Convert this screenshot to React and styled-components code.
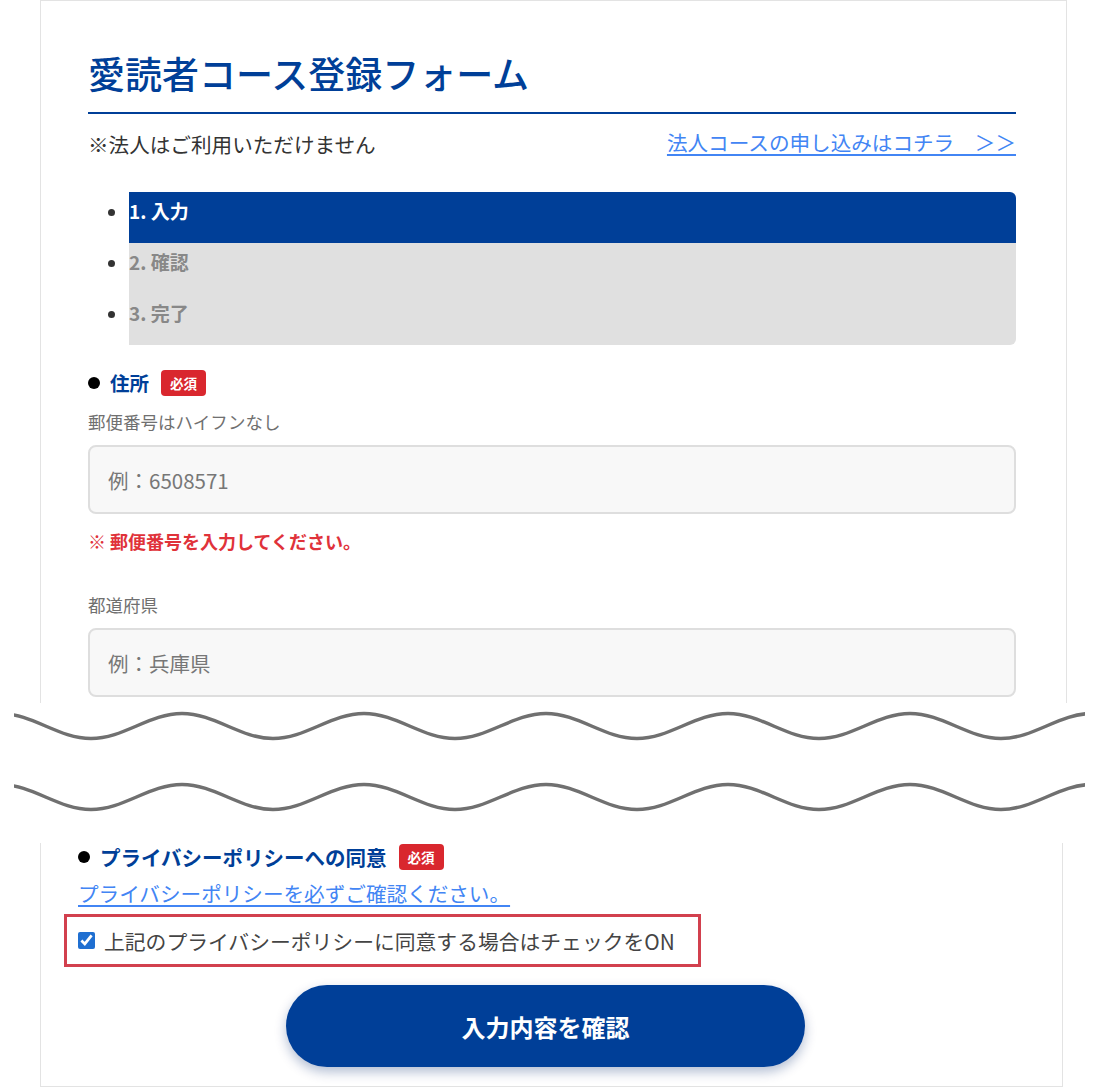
import styled, { createGlobalStyle } from 'styled-components';

const GlobalStyle = createGlobalStyle`
  body {
    margin: 0;
    background: #fff;
    font-family: "Noto Sans CJK JP", "Noto Sans", sans-serif;
    color: #333;
  }
`;

const BLUE = '#003f98';

// Panel superior (cortado por abajo)
const TopPanel = styled.section`
  box-sizing: border-box;
  width: 1027px;
  margin-left: 40px;
  border: 1px solid #e3e3e3;
  border-bottom: none;
  padding: 44px 50px 6px 47px;
`;

const Title = styled.h1`
  margin: 0;
  font-size: 37px;
  line-height: 56px;
  font-weight: 500;
  color: ${BLUE};
  padding-bottom: 11px;
  border-bottom: 2px solid ${BLUE};
`;

const NoticeRow = styled.div`
  display: flex;
  justify-content: space-between;
  margin-top: 15px;
  font-size: 20.6px;
  line-height: 30px;
  color: #333;
`;

const Link = styled.a`
  color: #4285f4;
  text-decoration: underline;
  text-underline-offset: 3px;
  font-size: ${p => p.$size || 20.6}px;
  line-height: 26px;
`;

const Steps = styled.ul`
  margin: 33px 0 0;
  padding-left: 41px;
  list-style: disc;
`;

const Step = styled.li`
  font-size: 19px;
  font-weight: 700;
  line-height: 26px;
  padding: 6px 0 19px;
  background: ${p => (p.$active ? BLUE : '#e0e0e0')};
  color: ${p => (p.$active ? '#fff' : '#888')};

  &::marker {
    color: #333;
  }
  &:first-child {
    border-top-right-radius: 6px;
  }
  &:last-child {
    border-bottom-right-radius: 6px;
  }
`;

const Heading = styled.div`
  display: flex;
  align-items: center;
  gap: 12px;
  margin-top: ${p => p.$top || 0}px;
  font-size: ${p => p.$size || 19.5}px;
  line-height: 28px;
  font-weight: 700;
  color: ${BLUE};

  &::before {
    content: '';
    width: 12px;
    height: 12px;
    border-radius: 50%;
    background: #000;
    margin-right: -2px;
  }
`;

const Badge = styled.span`
  display: inline-flex;
  align-items: center;
  justify-content: center;
  width: 45px;
  height: 26px;
  border-radius: 4px;
  background: #d9272e;
  color: #fff;
  font-size: 13.5px;
  font-weight: 700;
`;

const FieldLabel = styled.div`
  margin-top: ${p => p.$top}px;
  font-size: 17.5px;
  line-height: 26px;
  color: #707070;
`;

const TextInput = styled.input`
  display: block;
  box-sizing: border-box;
  width: 100%;
  height: 69px;
  margin-top: 10px;
  padding: 0 18px;
  border: 2px solid #dedede;
  border-radius: 8px;
  background: #f8f8f8;
  font-family: inherit;
  font-size: 20.5px;
  color: #333;
  outline: none;

  &::placeholder {
    color: #777;
  }
`;

const ErrorText = styled.div`
  margin-top: 14px;
  font-size: 18px;
  line-height: 26px;
  font-weight: 700;
  color: #e0323a;
`;

// Separador ondulado entre las dos capturas
const WaveBreak = styled.div`
  height: 140px;
  padding-left: 14px;

  svg {
    display: block;
  }
`;

const BottomPanel = styled.section`
  box-sizing: border-box;
  width: 1023px;
  margin-left: 40px;
  border: 1px solid #e3e3e3;
  border-top: none;
  padding: 0 20px 19px 37px;
`;

const LinkLine = styled.div`
  margin-top: 9px;
  line-height: 26px;
`;

const AgreeBox = styled.label`
  display: inline-flex;
  align-items: center;
  box-sizing: border-box;
  height: 53px;
  margin: 6px 0 0 -14px;
  padding: 0 23px 0 11px;
  border: 3px solid #d2404e;
  font-size: 20.8px;
  color: #444;

  input {
    width: 17px;
    height: 17px;
    margin: 0 9px 0 0;
    accent-color: #1f6fd1;
  }
`;

const SubmitButton = styled.button`
  display: block;
  width: 519px;
  height: 82px;
  margin: 18px 0 0 208px;
  border: none;
  border-radius: 41px;
  background: ${BLUE};
  color: #fff;
  font-family: inherit;
  font-size: 24px;
  font-weight: 700;
  box-shadow: 0 5px 12px rgba(0, 40, 110, 0.3);
  cursor: pointer;
`;

const wavePath = (cy) => {
  const h = 91;
  const a = 12.5;
  let d = `M0 ${cy - a}`;
  for (let i = 0; i < 13; i++) {
    const x = i * h;
    const y0 = i % 2 === 0 ? cy - a : cy + a;
    const y1 = i % 2 === 0 ? cy + a : cy - a;
    d += ` C${x + h * 0.36} ${y0} ${x + h * 0.64} ${y1} ${x + h} ${y1}`;
  }
  return d;
};

const Waves = () => (
  <svg width="1071" height="140" viewBox="14 0 1071 140">
    <path d={wavePath(23)} fill="none" stroke="#707070" strokeWidth="3.5" />
    <path d={wavePath(94)} fill="none" stroke="#707070" strokeWidth="3.5" />
  </svg>
);

export default function App() {
  return (
    <>
      <GlobalStyle />
      <TopPanel>
        <Title>愛読者コース登録フォーム</Title>
        <NoticeRow>
          <span>※法人はご利用いただけません</span>
          <Link href="#">法人コースの申し込みはコチラ　＞＞</Link>
        </NoticeRow>

        <Steps>
          <Step $active>1. 入力</Step>
          <Step>2. 確認</Step>
          <Step>3. 完了</Step>
        </Steps>

        <Heading $top={24}>
          住所<Badge>必須</Badge>
        </Heading>
        <FieldLabel $top={12}>郵便番号はハイフンなし</FieldLabel>
        <TextInput placeholder="例：6508571" />
        <ErrorText>※ 郵便番号を入力してください。</ErrorText>

        <FieldLabel $top={38}>都道府県</FieldLabel>
        <TextInput placeholder="例：兵庫県" />
      </TopPanel>

      <WaveBreak>
        <Waves />
      </WaveBreak>

      <BottomPanel>
        <Heading $size={20.5}>
          プライバシーポリシーへの同意<Badge>必須</Badge>
        </Heading>
        <LinkLine>
          <Link href="#" $size={20.6}>プライバシーポリシーを必ずご確認ください。</Link>
        </LinkLine>
        <AgreeBox>
          <input type="checkbox" defaultChecked />
          上記のプライバシーポリシーに同意する場合はチェックをON
        </AgreeBox>
        <SubmitButton>入力内容を確認</SubmitButton>
      </BottomPanel>
    </>
  );
}
